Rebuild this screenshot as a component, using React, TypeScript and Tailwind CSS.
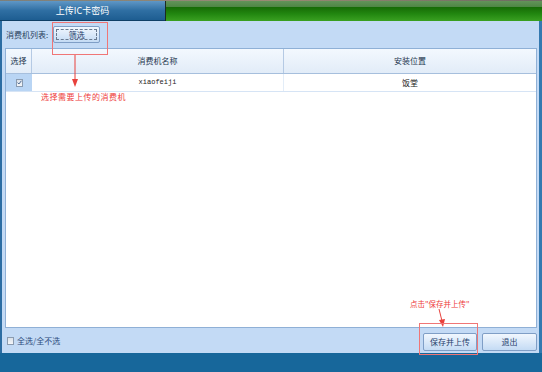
const cjk = { fontFamily: '"Noto Sans CJK SC", "Liberation Sans", sans-serif' };

function Btn({ label, focus, className }: { label: string; focus?: boolean; className?: string }) {
  return (
    <div
      className={`flex items-center justify-center rounded-[2px] border border-[#7f9ec6] bg-gradient-to-b from-[#f1f7fe] via-[#dbe9f9] to-[#c4dbf4] p-[2px] ${className ?? ""}`}
    >
      <div
        className={`flex h-full w-full items-center justify-center text-[8px] text-[#1f3d6b] ${
          focus ? "border border-dashed border-[#6a7a90]" : ""
        }`}
      >
        {label}
      </div>
    </div>
  );
}

function Check({ checked }: { checked?: boolean }) {
  return (
    <div className="flex h-[8px] w-[7px] items-center justify-center border border-[#8a9bb0] bg-gradient-to-b from-[#d9e0e8] to-[#f4f6f9]">
      {checked && (
        <svg width="5" height="5" viewBox="0 0 5 5">
          <path d="M0.6 2.6 L1.9 4 L4.4 0.8" stroke="#3b5a86" strokeWidth="0.9" fill="none" />
        </svg>
      )}
    </div>
  );
}

export default function App() {
  return (
    <div className="relative flex h-[372px] w-[542px] flex-col overflow-hidden bg-[#c3daf5]" style={cjk}>
      {/* title bar */}
      <div className="flex h-[21px] flex-col">
        <div className="h-[1px] bg-gradient-to-r from-[#7d7f7a] via-[#9a8a72] to-[#6b6a60]" />
        <div className="flex flex-1">
          <div className="flex w-[165px] items-center justify-center border-b border-[#0f3f66] bg-gradient-to-b from-[#5f97c6] via-[#2f6fa3] to-[#1d5d91] text-[9px] text-white">
            上传IC卡密码
          </div>
          <div className="w-[1px] bg-[#1b2b22]" />
          <div className="flex flex-1 flex-col">
            <div className="h-[6px] bg-gradient-to-b from-[#63935a] to-[#4e8644]" />
            <div className="flex-1 bg-gradient-to-b from-[#166a06] via-[#228710] to-[#3aa021]" />
          </div>
        </div>
      </div>

      {/* body */}
      <div className="flex flex-1">
        <div className="w-[2px] bg-[#2c6da3]" />
        <div className="flex flex-1 flex-col pl-[3px] pr-[2px]">
          {/* toolbar */}
          <div className="flex h-[27px] items-center gap-[5px] pl-[1px]">
            <span className="text-[8px] text-[#2a3f5c]">消费机列表:</span>
            <Btn label="筛选" focus className="h-[17px] w-[47px]" />
          </div>

          {/* table */}
          <div className="flex h-[280px] flex-col border border-[#8fb0d6] bg-white">
            <div className="flex h-[25px] border-b border-[#a6bfdd] bg-gradient-to-b from-[#f3f8fe] to-[#e2ecf8] text-[8px] text-[#22344d]">
              <div className="flex w-[26px] items-center justify-center border-r border-[#b5cae4]">选择</div>
              <div className="flex w-[252px] items-center justify-center border-r border-[#b5cae4]">消费机名称</div>
              <div className="flex flex-1 items-center justify-center">安装位置</div>
            </div>
            <div className="flex h-[18px] border-b border-[#d6e4f5] text-[8px] text-[#222]">
              <div className="flex w-[26px] items-center justify-center bg-[#b9d5f4]">
                <Check checked />
              </div>
              <div
                className="flex w-[252px] items-center justify-center border-r border-[#e3edf8] text-[7px]"
                style={{ fontFamily: '"Liberation Mono", monospace' }}
              >
                xiaofeiji
              </div>
              <div className="flex flex-1 items-center justify-center">饭堂</div>
            </div>
          </div>

          {/* footer */}
          <div className="flex flex-1 items-center justify-between pl-[2px]">
            <div className="flex items-center gap-[3px] pt-[1px]">
              <Check />
              <span className="text-[8px] text-[#2b4a7c]">全选/全不选</span>
            </div>
            <div className="flex gap-[5px] pt-[2px]">
              <Btn label="保存并上传" className="h-[18px] w-[54px]" />
              <Btn label="退出" className="h-[18px] w-[55px]" />
            </div>
          </div>
        </div>
        <div className="w-[3px] bg-[#3479b0]" />
      </div>

      {/* bottom bar */}
      <div className="h-[19px] bg-[#17679b]" />

      {/* annotations */}
      <div className="absolute left-[52px] top-[22px] h-[33px] w-[56px] border border-[#f07676]" />
      <svg className="absolute left-0 top-0" width="542" height="372">
        <line x1="75" y1="55" x2="75" y2="80" stroke="#e8413c" strokeWidth="1" />
        <polygon points="72,79 78,79 75,87" fill="#e8413c" />
        <line x1="439" y1="309" x2="442" y2="321" stroke="#e8413c" strokeWidth="1" />
        <polygon points="439,320 445,319 443,327" fill="#e8413c" />
      </svg>
      <div className="absolute left-[41px] top-[91px] text-[8px] tracking-[0.5px] text-[#ee3b3b]">选择需要上传的消费机</div>
      <div className="absolute left-[410px] top-[298px] text-[7.5px] text-[#ee3b3b]">点击"保存并上传"</div>
      <div className="absolute left-[419px] top-[323px] h-[32px] w-[59px] border border-[#f07676]" />
    </div>
  );
}
